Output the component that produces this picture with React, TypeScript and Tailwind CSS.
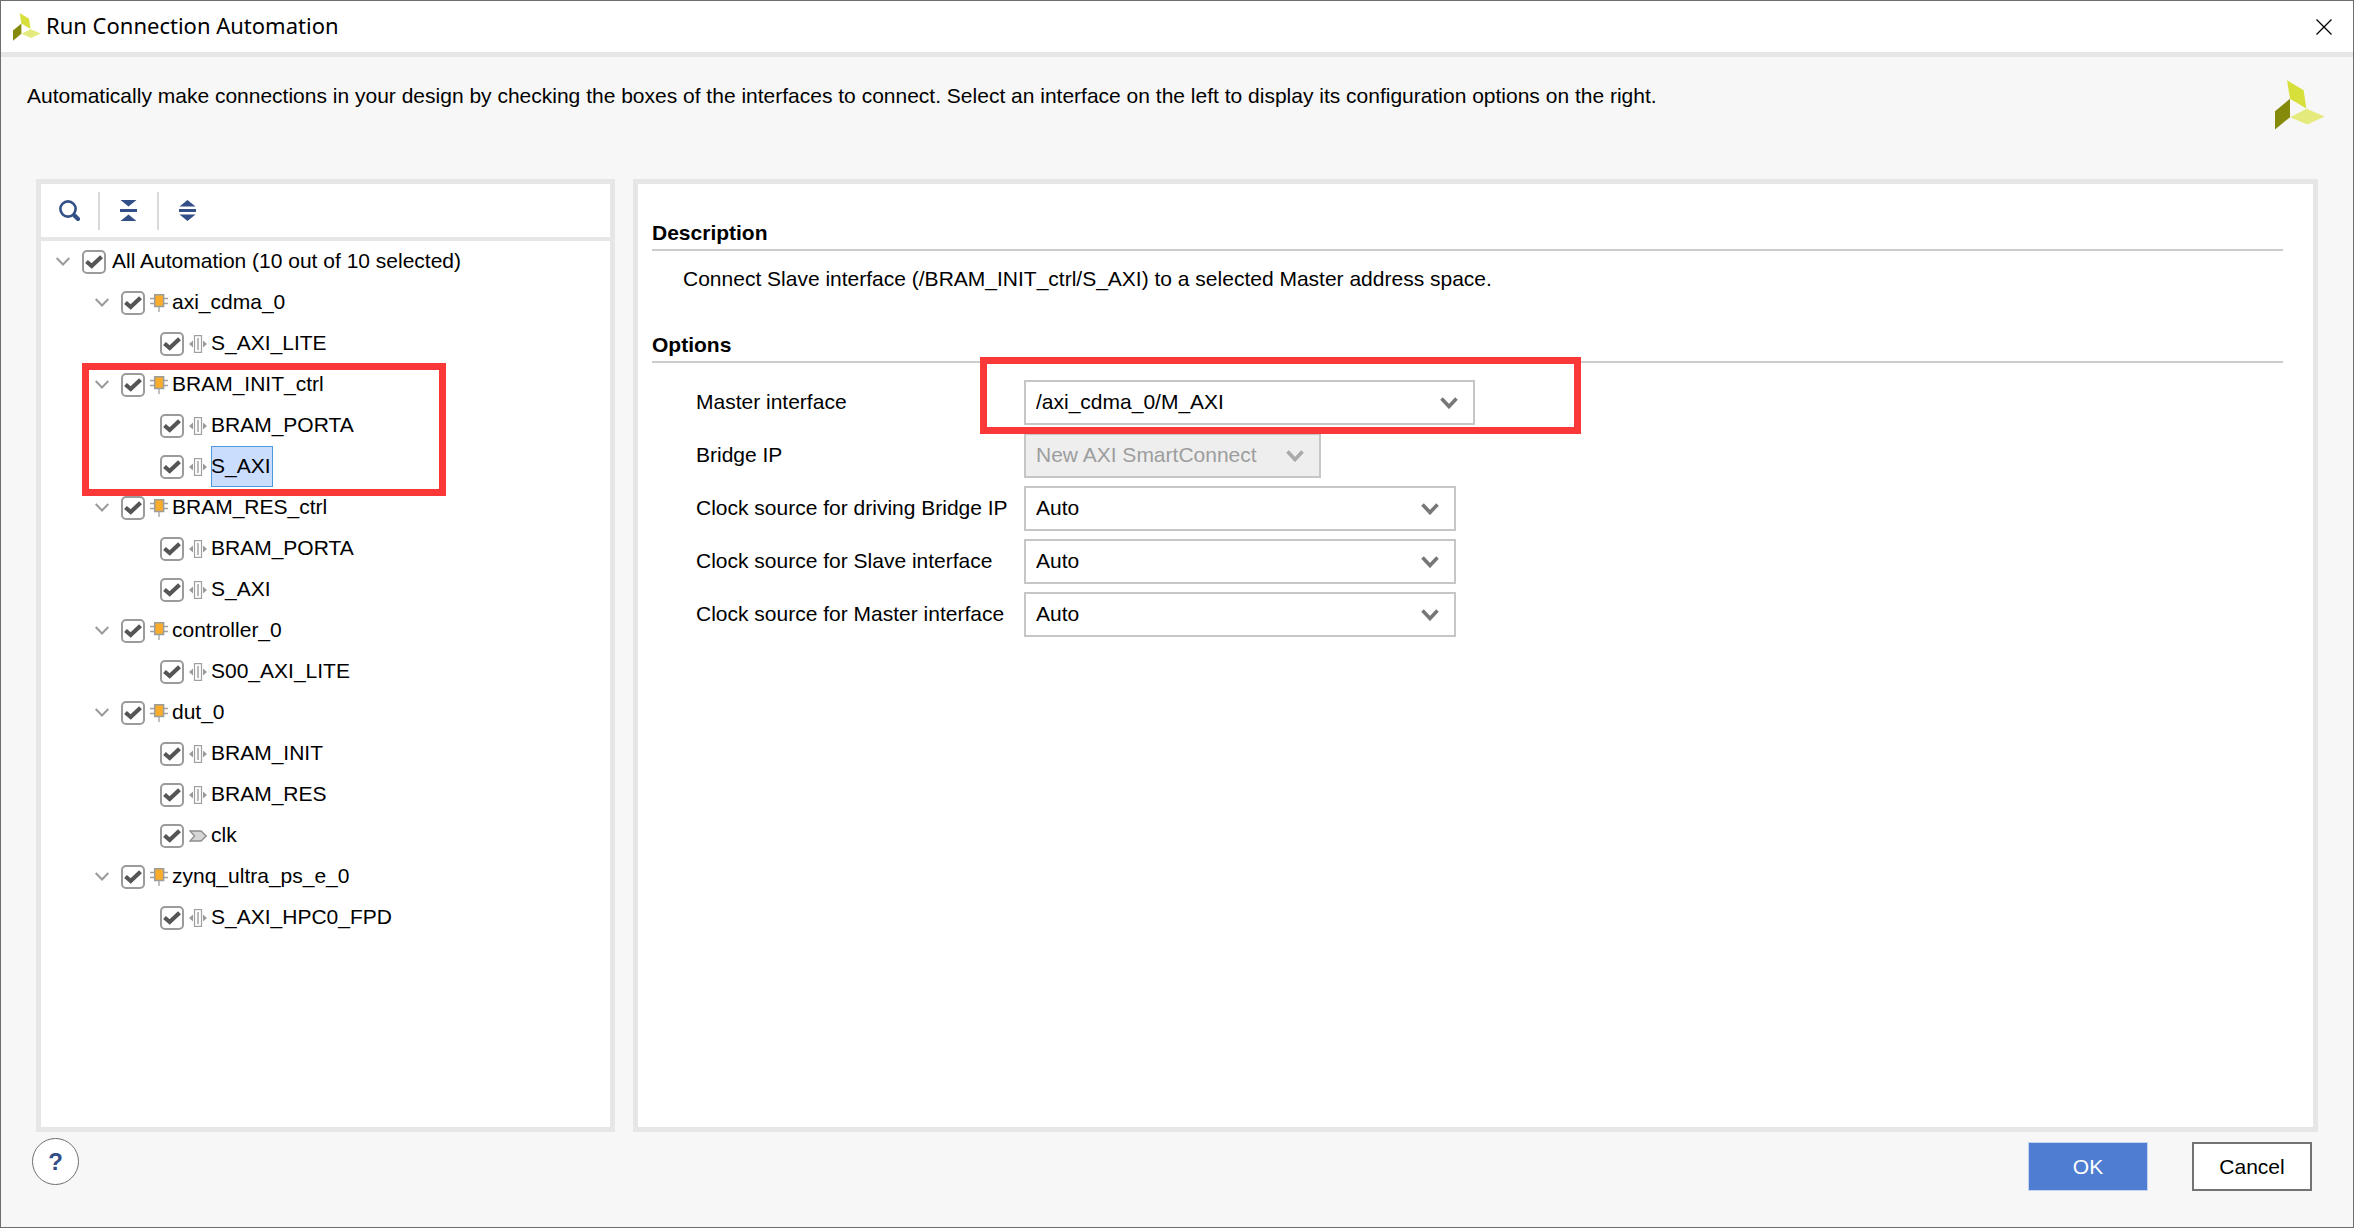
import { useId, useState, type ReactNode } from "react";

type Kind = "root" | "block" | "port" | "clock";

interface TreeItem {
  label: string;
  kind: Kind;
  selected?: boolean;
}

const tree: TreeItem[] = [
  { label: "All Automation (10 out of 10 selected)", kind: "root" },
  { label: "axi_cdma_0", kind: "block" },
  { label: "S_AXI_LITE", kind: "port" },
  { label: "BRAM_INIT_ctrl", kind: "block" },
  { label: "BRAM_PORTA", kind: "port" },
  { label: "S_AXI", kind: "port", selected: true },
  { label: "BRAM_RES_ctrl", kind: "block" },
  { label: "BRAM_PORTA", kind: "port" },
  { label: "S_AXI", kind: "port" },
  { label: "controller_0", kind: "block" },
  { label: "S00_AXI_LITE", kind: "port" },
  { label: "dut_0", kind: "block" },
  { label: "BRAM_INIT", kind: "port" },
  { label: "BRAM_RES", kind: "port" },
  { label: "clk", kind: "clock" },
  { label: "zynq_ultra_ps_e_0", kind: "block" },
  { label: "S_AXI_HPC0_FPD", kind: "port" },
];

const indents: Record<Kind, string> = {
  root: "pl-[15px]",
  block: "pl-[54px]",
  port: "pl-[119px]",
  clock: "pl-[119px]",
};

function Logo({ className }: { className: string }) {
  return (
    <svg viewBox="225 240 150 149" className={className} aria-hidden="true">
      <path d="M261 240 311 270 319 325 270 296Z" fill="#d7e03a" />
      <path d="M270 296V351L225 388V333Z" fill="#868a0a" />
      <path d="M270 351 320 326 374 349 322 373Z" fill="#e4ea7c" />
    </svg>
  );
}

function BlockIcon() {
  return (
    <svg viewBox="0 0 18 18" className="h-[18px] w-[18px]" aria-hidden="true">
      <path d="M0 4.500H18M0 9.500H18M9 13V18" stroke="#a0a0a0" strokeWidth="1.300" fill="none" />
      <rect x="4.700" y="0.700" width="8.900" height="11.800" fill="#f9ad2b" stroke="#9c9c9c" strokeWidth="1.500" />
    </svg>
  );
}

function PortIcon() {
  return (
    <svg viewBox="0 0 18 18" className="h-[18px] w-[18px]" aria-hidden="true">
      <path d="M0 9 4 5.500V12.500ZM18 9 14 5.500V12.500Z" fill="#9a9a9a" />
      <rect x="5.500" y="0.600" width="7" height="16.800" fill="#fff" stroke="#a0a0a0" strokeWidth="1.200" />
      <rect x="8.200" y="3" width="1.600" height="12" fill="#a8a8a8" />
    </svg>
  );
}

function ClockIcon() {
  return (
    <svg viewBox="0 0 18 18" className="h-[18px] w-[18px]" aria-hidden="true">
      <path d="M1 4H12L17.200 9 12 14H1L5.500 9Z" fill="#d6d6d6" stroke="#8c8c8c" strokeWidth="1.300" />
    </svg>
  );
}

function TreeRow({ item }: { item: TreeItem }) {
  const [checked, setChecked] = useState(true);
  return (
    <li className={`flex h-[41px] items-center ${indents[item.kind]}`}>
      {(item.kind === "root" || item.kind === "block") && (
        <button type="button" aria-label={`Collapse ${item.label}`} className="mr-3 shrink-0">
          <svg viewBox="0 0 14 9" className="h-[9px] w-[14px]" aria-hidden="true">
            <path d="M0.700 1 7 7.500 13.300 1" fill="none" stroke="#9a9a9a" strokeWidth="2" />
          </svg>
        </button>
      )}
      <label className="flex h-full items-center">
        <span className="grid">
          <input
            type="checkbox"
            checked={checked}
            onChange={(e) => setChecked(e.target.checked)}
            className="peer col-start-1 row-start-1 h-6 w-6 appearance-none rounded-[5px] border-2 border-[#9b9b9b] bg-white"
          />
          <svg
            viewBox="0 0 24 24"
            className="pointer-events-none invisible col-start-1 row-start-1 h-6 w-6 peer-checked:visible"
            aria-hidden="true"
          >
            <path d="M4.500 11.500 9.700 16 19.500 6.800" fill="none" stroke="#555" strokeWidth="4.200" />
          </svg>
        </span>
        {item.kind === "root" && <span className="w-[6px]" />}
        {item.kind !== "root" && (
          <span className="ml-[5px] mr-1">
            {item.kind === "block" && <BlockIcon />}
            {item.kind === "port" && <PortIcon />}
            {item.kind === "clock" && <ClockIcon />}
          </span>
        )}
        <span
          className={
            item.selected
              ? "flex h-full items-center bg-[#cbddfd] pb-[2px] pr-[2px] outline-1 -outline-offset-1 outline-[#4b98dc]"
              : "flex h-full items-center pb-[2px]"
          }
        >
          {item.label}
        </span>
      </label>
    </li>
  );
}

function ToolButton({ label, children }: { label: string; children: ReactNode }) {
  return (
    <button type="button" aria-label={label} className="flex h-[38px] w-[57px] items-center justify-center">
      <svg viewBox="0 0 21 21" className="h-[21px] w-[21px]" fill="#324f87" aria-hidden="true">
        {children}
      </svg>
    </button>
  );
}

function OptionRow({
  label,
  value,
  width,
  disabled = false,
}: {
  label: string;
  value: string;
  width: string;
  disabled?: boolean;
}) {
  const id = useId();
  return (
    <div className="flex items-center">
      <label htmlFor={id} className="w-[328px] shrink-0 pb-[2px]">
        {label}
      </label>
      <span className={`grid items-center ${width}`}>
        <select
          id={id}
          disabled={disabled}
          className="col-start-1 row-start-1 h-[45px] w-full appearance-none border-2 border-[#c6c6c6] bg-white pb-[2px] pl-[10px] text-black opacity-100 disabled:bg-[#eeeeee] disabled:text-[#9d9d9d]"
        >
          <option>{value}</option>
        </select>
        <svg
          viewBox="0 0 18 12"
          className={`pointer-events-none col-start-1 row-start-1 mr-[17px] h-3 w-[18px] justify-self-end ${
            disabled ? "text-[#a9a9a9]" : "text-[#777777]"
          }`}
          aria-hidden="true"
        >
          <path d="M1.500 1.500 9 9.500 16.500 1.500" fill="none" stroke="currentColor" strokeWidth="3.600" />
        </svg>
      </span>
    </div>
  );
}

export default function App() {
  return (
    <div className="flex min-h-screen flex-col border border-[#6e6e6e] bg-[#f7f7f7] font-['Liberation_Sans',Arial,sans-serif] text-[21px] leading-6 text-black">
      <header className="flex h-14 items-center border-b-[5px] border-[#e6e6e6] bg-white pl-3 pr-[21px]">
        <Logo className="h-7 w-7" />
        <h1 className="ml-[5px] pb-[3px] font-['Noto_Sans','Open_Sans',sans-serif] text-[22px]">
          Run Connection Automation
        </h1>
        <button type="button" aria-label="Close" className="ml-auto">
          <svg viewBox="0 0 16 16" className="h-4 w-4" aria-hidden="true">
            <path d="M0.500 0.500 15.500 15.500M15.500 0.500 0.500 15.500" stroke="#000" strokeWidth="1.300" />
          </svg>
        </button>
      </header>

      <div className="flex h-[122px] items-start justify-between pl-[26px] pr-[28px]">
        <p className="mt-[27px]">
          Automatically make connections in your design by checking the boxes of the interfaces to connect. Select an
          interface on the left to display its configuration options on the right.
        </p>
        <Logo className="mt-[23px] h-[50px] w-[50px] shrink-0" />
      </div>

      <main className="flex flex-1 gap-[18px] px-[35px]">
        <section aria-label="Automation tree" className="w-[579px] shrink-0 border-[5px] border-[#e6e6e6] bg-white">
          <div className="flex h-[57px] items-center border-b-4 border-[#e6e6e6]">
            <ToolButton label="Search">
              <circle cx="9" cy="9" r="7.600" fill="none" stroke="#324f87" strokeWidth="2.600" />
              <path d="M15.500 15.500 19 19" fill="none" stroke="#324f87" strokeWidth="4.200" strokeLinecap="round" />
            </ToolButton>
            <span className="h-[38px] w-[2px] bg-[#d9d9d9]" />
            <ToolButton label="Collapse all">
              <path d="M2.500 0H18.500L10.500 6.500ZM2 9H19V12H2ZM2.500 21H18.500L10.500 14.500Z" />
            </ToolButton>
            <span className="h-[38px] w-[2px] bg-[#d9d9d9]" />
            <ToolButton label="Expand all">
              <path d="M2.500 6.500H18.500L10.500 0ZM2 9H19V12H2ZM2.500 14.500H18.500L10.500 21Z" />
            </ToolButton>
          </div>
          <div className="relative">
            <ul>
              {tree.map((item, i) => (
                <TreeRow key={i} item={item} />
              ))}
            </ul>
            <div className="pointer-events-none absolute left-[41px] top-[122px] h-[133px] w-[364px] border-[7px] border-[#fa3838]" />
          </div>
        </section>

        <section aria-label="Configuration" className="flex-1 border-[5px] border-[#e6e6e6] bg-white pl-[14px] pr-[30px]">
          <h2 className="mt-[37px] border-b-2 border-[#cccccc] pb-1 font-bold">Description</h2>
          <p className="ml-[31px] mt-4">
            Connect Slave interface (/BRAM_INIT_ctrl/S_AXI) to a selected Master address space.
          </p>
          <h2 className="mt-[42px] border-b-2 border-[#cccccc] pb-1 font-bold">Options</h2>
          <div className="relative ml-11 flex flex-col gap-2 pt-[17px]">
            <OptionRow label="Master interface" value="/axi_cdma_0/M_AXI" width="w-[451px]" />
            <OptionRow label="Bridge IP" value="New AXI SmartConnect" width="w-[297px]" disabled />
            <OptionRow label="Clock source for driving Bridge IP" value="Auto" width="w-[432px]" />
            <OptionRow label="Clock source for Slave interface" value="Auto" width="w-[432px]" />
            <OptionRow label="Clock source for Master interface" value="Auto" width="w-[432px]" />
            <div className="pointer-events-none absolute -top-[6px] left-[284px] h-[77px] w-[601px] border-[7px] border-[#fa3838]" />
          </div>
        </section>
      </main>

      <footer className="flex h-[95px] items-start pl-[31px] pr-[41px]">
        <button
          type="button"
          aria-label="Help"
          className="mt-[6px] h-[47px] w-[47px] rounded-full border border-[#707070] bg-white text-[24px] font-bold text-[#324f87]"
        >
          ?
        </button>
        <button type="button" className="ml-auto mt-[10px] h-[49px] w-[120px] border border-[#c4d4f0] bg-[#4f7dd1] text-white">
          OK
        </button>
        <button type="button" className="ml-11 mt-[10px] h-[49px] w-[120px] border-2 border-[#737373] bg-white">
          Cancel
        </button>
      </footer>
    </div>
  );
}
